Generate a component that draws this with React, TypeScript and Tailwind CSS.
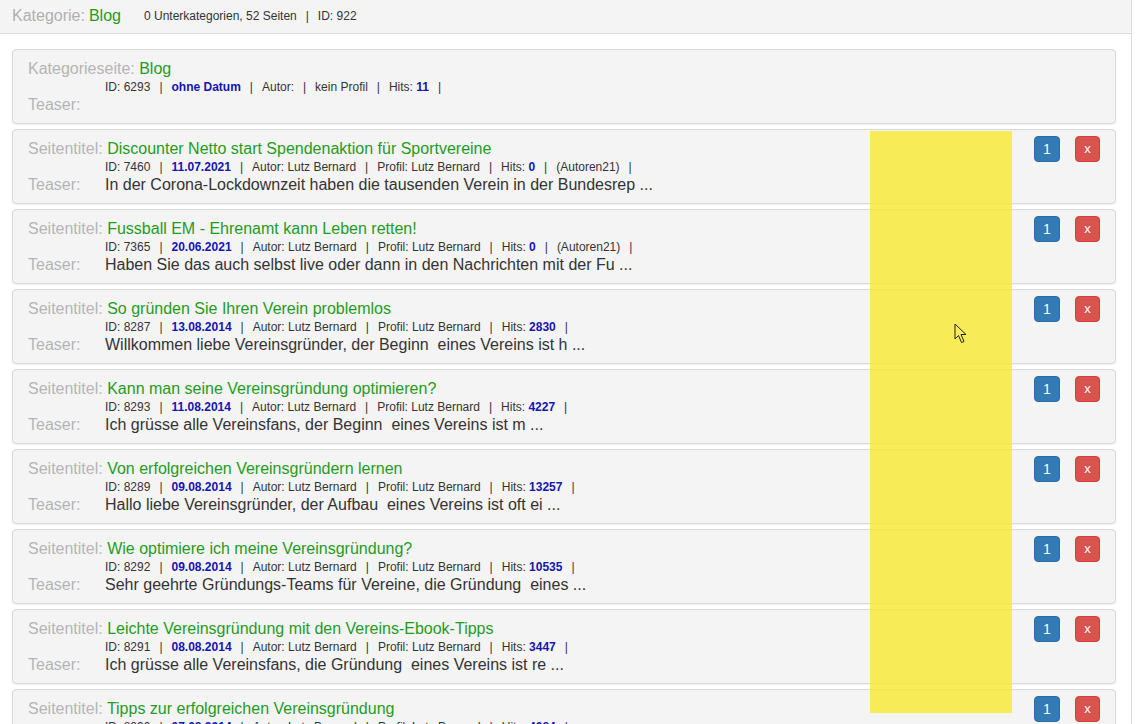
import React from "react";

type Page = {
  id: string;
  date: string;
  hits: string;
  extra?: string;
  title: string;
  teaser: string;
};

const pages: Page[] = [
  { id: "7460", date: "11.07.2021", hits: "0", extra: "(Autoren21)", title: "Discounter Netto start Spendenaktion für Sportvereine", teaser: "In der Corona-Lockdownzeit haben die tausenden Verein in der Bundesrep ..." },
  { id: "7365", date: "20.06.2021", hits: "0", extra: "(Autoren21)", title: "Fussball EM - Ehrenamt kann Leben retten!", teaser: "Haben Sie das auch selbst live oder dann in den Nachrichten mit der Fu ..." },
  { id: "8287", date: "13.08.2014", hits: "2830", title: "So gründen Sie Ihren Verein problemlos", teaser: "Willkommen liebe Vereinsgründer, der Beginn  eines Vereins ist h ..." },
  { id: "8293", date: "11.08.2014", hits: "4227", title: "Kann man seine Vereinsgründung optimieren?", teaser: "Ich grüsse alle Vereinsfans, der Beginn  eines Vereins ist m ..." },
  { id: "8289", date: "09.08.2014", hits: "13257", title: "Von erfolgreichen Vereinsgründern lernen", teaser: "Hallo liebe Vereinsgründer, der Aufbau  eines Vereins ist oft ei ..." },
  { id: "8292", date: "09.08.2014", hits: "10535", title: "Wie optimiere ich meine Vereinsgründung?", teaser: "Sehr geehrte Gründungs-Teams für Vereine, die Gründung  eines ..." },
  { id: "8291", date: "08.08.2014", hits: "3447", title: "Leichte Vereinsgründung mit den Vereins-Ebook-Tipps", teaser: "Ich grüsse alle Vereinsfans, die Gründung  eines Vereins ist re ..." },
  { id: "8290", date: "07.08.2014", hits: "4084", title: "Tipps zur erfolgreichen Vereinsgründung", teaser: "Liebe Vereinsfans, die Gründung  eines Vereins ist ..." },
];

const Sep = () => <span className="mx-[9px] text-[#333]">|</span>;

function Meta({ items }: { items: React.ReactNode[] }) {
  return (
    <div className="pl-[77px] text-[12px] leading-[18px] text-[#333] whitespace-nowrap">
      {items.map((it, i) => (
        <React.Fragment key={i}>
          {it}
          <Sep />
        </React.Fragment>
      ))}
    </div>
  );
}

const Blue = ({ children }: { children: React.ReactNode }) => (
  <b className="text-[#1515b0]">{children}</b>
);

function Card({
  label,
  title,
  meta,
  teaser,
  buttons,
}: {
  label: string;
  title: string;
  meta: React.ReactNode[];
  teaser: string;
  buttons?: boolean;
}) {
  return (
    <div className="flex rounded-[4px] border border-[#d9d9d9] bg-[#f4f4f4] shadow-[0_1px_1px_rgba(0,0,0,0.06)]">
      <div className="flex-1 pl-[15px] pt-[10px] pb-[10px]">
        <div className="text-[16px] leading-[18px] whitespace-nowrap">
          <span className="text-[#b5b5b5]">{label}</span>{" "}
          <span className="text-[#1f9c1f]">{title}</span>
        </div>
        <Meta items={meta} />
        <div className="flex text-[16px] leading-[17px] whitespace-pre">
          <span className="w-[77px] text-[#b5b5b5]">Teaser:</span>
          <span className="text-[#333]">{teaser}</span>
        </div>
      </div>
      {buttons && (
        <div className="flex gap-[15px] self-start pt-[6px] pr-[15px]">
          <div className="flex h-[26px] w-[26px] items-center justify-center rounded-[4px] border border-[#2e6da4] bg-[#337ab7] text-[14px] text-white">
            1
          </div>
          <div className="flex h-[26px] w-[25px] items-center justify-center rounded-[4px] border border-[#d43f3a] bg-[#d9534f] text-[13px] text-white">
            x
          </div>
        </div>
      )}
    </div>
  );
}

export default function App() {
  return (
    <div
      className="relative h-[724px] w-[1138px] overflow-hidden bg-white"
      style={{ fontFamily: '"Liberation Sans", Arial, sans-serif' }}
    >
      <div className="h-full w-[1132px] border-r border-[#dcdcdc]">
        <div className="flex h-[34px] items-center border-b border-[#dcdcdc] bg-[#f4f4f4] pl-[12px] pb-[2px]">
          <span className="text-[16px] text-[#b0b0b0]">Kategorie:</span>
          <span className="ml-[4px] text-[16px] text-[#1f9c1f]">Blog</span>
          <span className="ml-[23px] text-[12px] text-[#333]">
            0 Unterkategorien, 52 Seiten
            <Sep />
            ID: 922
          </span>
        </div>
        <div className="flex flex-col gap-[5px] pt-[15px] pl-[12px] pr-[15px]">
          <Card
            label="Kategorieseite:"
            title="Blog"
            meta={[
              "ID: 6293",
              <Blue key="d">ohne Datum</Blue>,
              "Autor:",
              "kein Profil",
              <span key="h">
                Hits: <Blue>11</Blue>
              </span>,
            ]}
            teaser=""
          />
          {pages.map((p) => {
            const meta: React.ReactNode[] = [
              `ID: ${p.id}`,
              <Blue key="d">{p.date}</Blue>,
              "Autor: Lutz Bernard",
              "Profil: Lutz Bernard",
              <span key="h">
                Hits: <Blue>{p.hits}</Blue>
              </span>,
            ];
            if (p.extra) meta.push(p.extra);
            return (
              <Card
                key={p.id}
                label="Seitentitel:"
                title={p.title}
                meta={meta}
                teaser={p.teaser}
                buttons
              />
            );
          })}
        </div>
      </div>

      {/* yellow highlight overlay */}
      <div className="pointer-events-none absolute left-[870px] top-[131px] h-[582px] w-[142px] bg-[rgba(247,233,48,0.8)]" />

      {/* mouse cursor */}
      <svg
        className="absolute left-[954px] top-[323px]"
        width="14"
        height="22"
        viewBox="0 0 14 22"
      >
        <path
          d="M1 1 L1 16 L4.5 12.5 L7.5 19.5 L10 18.5 L7 11.5 L12 11.5 Z"
          fill="none"
          stroke="#222"
          strokeWidth="1"
          strokeLinejoin="round"
        />
      </svg>
    </div>
  );
}
